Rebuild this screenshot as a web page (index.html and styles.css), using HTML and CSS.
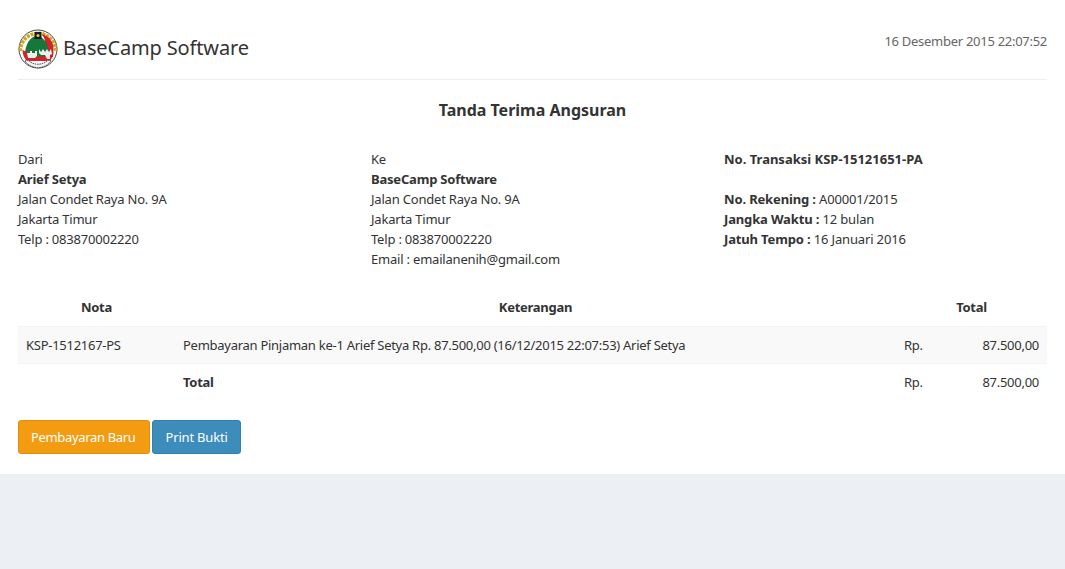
FILE: index.html
```html
<!DOCTYPE html>
<html>
<head>
<meta charset="UTF-8" />
<title>Tanda Terima Angsuran</title>
<link rel="stylesheet" href="styles.css">
</head>
<body>
<section class="invoice">
	<div class="page-header">
		<h2 class="brand">
			<svg class="logo" width="40" height="42" viewBox="0 0 40 42">
				<circle cx="20" cy="21" r="19" fill="#fff" stroke="#444" stroke-width="1"/>
				<path d="M2.3 23 A17.7 17.7 0 0 1 37.7 23" fill="none" stroke="#cfa823" stroke-width="3.6" stroke-dasharray="3 1"/>
				<path d="M24 6 A15.5 15.5 0 0 1 35.500 22 L35 29 L27 29 L27 12 Z" fill="#d8202a"/>
				<path d="M7 27 A12 19 0 0 1 31 27 L31 29 L7 29 Z" fill="#17763a"/>
				<path d="M4.5 22 L9 24 L10 29 L30 28 L35.5 24 A15.5 15.5 0 0 1 32 33 L9 33 A15.5 15.5 0 0 1 4.5 22 Z" fill="#d8202a"/>
				<path d="M9 25 h3 v-2 h2 v2 h3 v-2 h2 v5 l-2 2 h-7 Z" fill="#e8f2ec"/>
				<path d="M21 21 l2 3 2-3 2 3 2-3 2 3 2-3 1 5 -2 1 v4 h-3 l-2-4 h-4 l-2-2 Z" fill="#e8f2ec"/>
				<rect x="16.5" y="4" width="7" height="7" fill="#1a1a1a"/>
				<circle cx="20" cy="7.5" r="1.5" fill="#e8c93a"/>
				<path d="M7 33 A16 16 0 0 0 33 33 L30 32 A14 14 0 0 1 10 32 Z" fill="#f2f2f2" stroke="#333" stroke-width="1" stroke-dasharray="1.5 .8"/>
			</svg>
			<span class="brand-name">BaseCamp Software</span>
		</h2>
		<small class="date">16 Desember 2015 22:07:52</small>
	</div>

	<h4 class="title">Tanda Terima Angsuran</h4>

	<div class="info">
		<address class="col-a">
			Dari<br>
			<b>Arief Setya</b><br>
			Jalan Condet Raya No. 9A<br>
			Jakarta Timur<br>
			Telp : 083870002220
		</address>
		<address class="col-b">
			Ke<br>
			<b>BaseCamp Software</b><br>
			Jalan Condet Raya No. 9A<br>
			Jakarta Timur<br>
			Telp : 083870002220<br>
			Email : emailanenih@gmail.com
		</address>
		<div class="col-c">
			<b class="trx">No. Transaksi KSP-15121651-PA</b><br>
			<br>
			<b>No. Rekening :</b> A00001/2015<br>
			<b>Jangka Waktu :</b> 12 bulan<br>
			<b>Jatuh Tempo :</b> 16 Januari 2016
		</div>
	</div>

	<table class="items">
		<colgroup>
			<col class="w-nota">
			<col>
			<col class="w-rp">
			<col class="w-num">
		</colgroup>
		<thead>
			<tr>
				<th>Nota</th>
				<th>Keterangan</th>
				<th colspan="2">Total</th>
			</tr>
		</thead>
		<tbody>
			<tr class="odd">
				<td>KSP-1512167-PS</td>
				<td>Pembayaran Pinjaman ke-1 Arief Setya Rp. 87.500,00 (16/12/2015 22:07:53) Arief Setya</td>
				<td>Rp.</td>
				<td class="num">87.500,00</td>
			</tr>
			<tr>
				<td></td>
				<td><b>Total</b></td>
				<td>Rp.</td>
				<td class="num">87.500,00</td>
			</tr>
		</tbody>
	</table>

	<div class="actions">
		<a class="btn btn-warning">Pembayaran Baru</a>
		<a class="btn btn-primary">Print Bukti</a>
	</div>
</section>
</body>
</html>
```

FILE: styles.css
```css
* {
	box-sizing: border-box;
}
html, body {
	height: 100%;
}
body {
	margin: 0;
	background: #ecf0f5;
	color: #333;
	font: 14px/20px "Noto Sans", sans-serif;
}
.invoice {
	background: #fff;
	padding: 20px 18px 20px;
	height: 474px;
}
.page-header {
	display: flex;
	justify-content: space-between;
	height: 60px;
	border-bottom: 1px solid #eee;
	color: #333;
}
.brand {
	display: flex;
	align-items: center;
	gap: 5px;
	margin: 8px 0 0;
	height: 42px;
	font-size: 20px;
	font-weight: 400;
	letter-spacing: -0.15px;
}
.brand-name {
	margin-bottom: 3px;
}
.date {
	font-size: 13px;
	color: #666;
	margin-top: 11px;
	letter-spacing: -0.28px;
}
.title {
	margin: 20px 0 0;
	text-align: center;
	font-size: 16px;
	line-height: 20px;
	font-weight: 700;
}
.info {
	display: flex;
	margin-top: 29px;
	font-size: 13px;
	letter-spacing: -0.2px;
}
address {
	font-style: normal;
}
.col-a, .col-b {
	width: 353px;
}
.col-c {
	letter-spacing: -0.15px;
}
.col-c .trx {
	letter-spacing: 0;
}
.items {
	width: 100%;
	margin-top: 20px;
	border-collapse: collapse;
	table-layout: fixed;
	font-size: 13px;
	letter-spacing: -0.27px;
}
.w-nota {
	width: 157px;
}
.w-rp {
	width: 75px;
}
.w-num {
	width: 76px;
}
.items th {
	padding: 8px;
	height: 37px;
	text-align: center;
}
.items td {
	padding: 8px;
	height: 37px;
	border-top: 1px solid #f4f4f4;
}
.items .num {
	text-align: right;
}
.odd td {
	background: #f9f9f9;
}
.actions {
	display: flex;
	gap: 2px;
	margin-top: 20px;
}
.btn {
	padding: 6px 13px 6px 12px;
	border: 1px solid;
	border-radius: 3px;
	color: #fff;
	font-size: 13px;
	letter-spacing: -0.33px;
}
.btn-warning {
	background: #f39c12;
	border-color: #e08e0b;
}
.btn-primary {
	background: #3c8dbc;
	border-color: #367fa9;
	padding: 6px 12px 6px 13px;
	letter-spacing: -0.2px;
}
```
